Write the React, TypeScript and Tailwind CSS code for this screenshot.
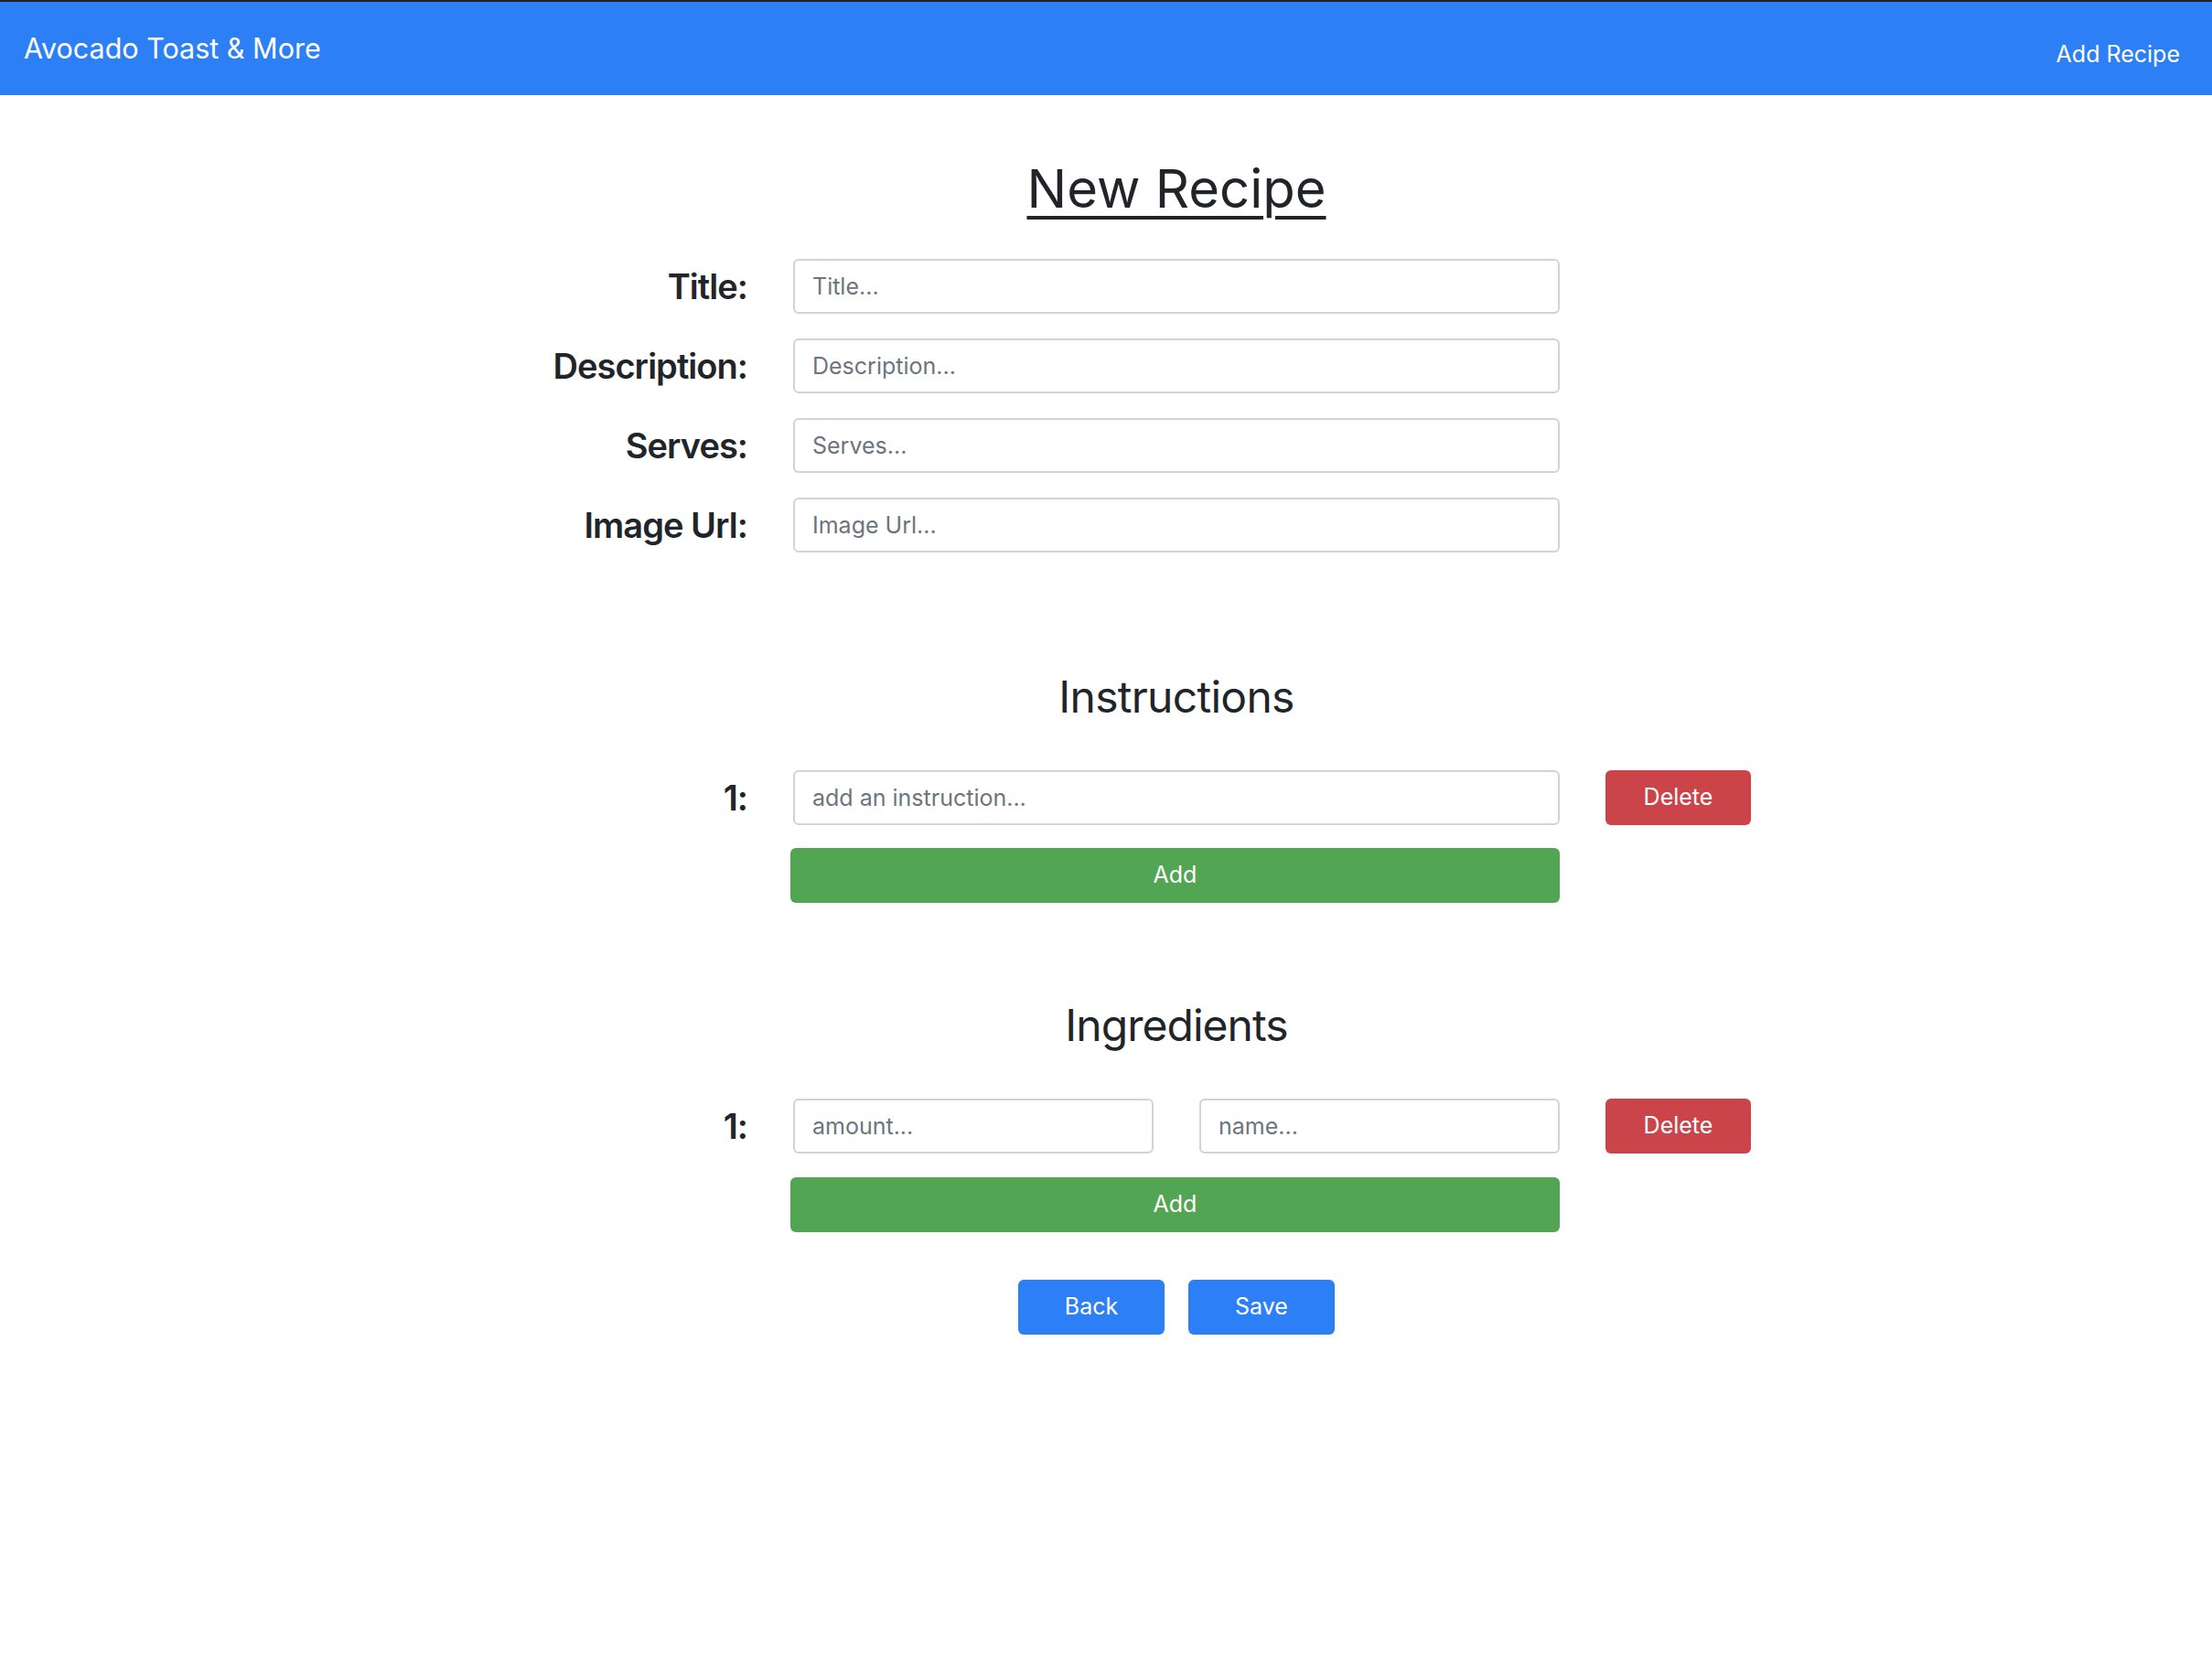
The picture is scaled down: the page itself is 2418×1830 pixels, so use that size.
import React, { useState } from 'react';

const font = "font-['Inter','Liberation_Sans',sans-serif]";

const inputClass =
  'w-full h-[60px] rounded-[6px] border-2 border-[#ced4da] bg-white px-[19px] text-[25px] text-[#495057] placeholder:text-[#6c757d] outline-none';

interface RowProps {
  label?: string;
  children?: React.ReactNode;
  action?: React.ReactNode;
  className?: string;
}

const Row: React.FC<RowProps> = ({ label, children, action, className = '' }) => (
  <div className={`grid grid-cols-[817px_838px_159px] gap-x-[50px] items-center ${className}`}>
    <div className="text-right text-[38px] font-semibold tracking-[-0.025em] leading-none text-[#212529]">{label}</div>
    <div>{children}</div>
    <div>{action}</div>
  </div>
);

const DeleteButton = () => (
  <button className="w-[159px] h-[60px] rounded-[6px] bg-[#cb444a] text-white text-[25px]">Delete</button>
);

const AddButton = ({ onClick }: { onClick?: () => void }) => (
  <button
    onClick={onClick}
    className="-ml-[3px] w-[841px] h-[60px] rounded-[6px] bg-[#52a552] text-white text-[25px]"
  >
    Add
  </button>
);

export default function App() {
  const [title, setTitle] = useState('');
  const [description, setDescription] = useState('');
  const [serves, setServes] = useState('');
  const [imageUrl, setImageUrl] = useState('');
  const [instruction, setInstruction] = useState('');
  const [amount, setAmount] = useState('');
  const [name, setName] = useState('');

  return (
    <div className={`min-h-screen bg-white text-[#212529] ${font}`}>
      {/* Navbar */}
      <nav className="h-[104px] border-t-2 border-[#222222] bg-[#2d7ff6] flex items-center justify-between pl-[26px] pr-[35px]">
        <span className="text-[30.5px] leading-none text-white">Avocado Toast &amp; More</span>
        <a href="#" className="mt-[12px] text-[25px] leading-none text-white">Add Recipe</a>
      </nav>

      <main className="pt-[66px] pb-[200px]">
        <Row>
          <h1 className="text-center text-[58px] leading-[72px] font-normal underline decoration-[4px] underline-offset-[9px]">
            New Recipe
          </h1>
        </Row>

        <div className="mt-[41px] flex flex-col gap-[27px]">
          <Row label="Title:">
            <input className={inputClass} placeholder="Title..." value={title} onChange={e => setTitle(e.target.value)} />
          </Row>
          <Row label="Description:">
            <input className={inputClass} placeholder="Description..." value={description} onChange={e => setDescription(e.target.value)} />
          </Row>
          <Row label="Serves:">
            <input className={inputClass} placeholder="Serves..." value={serves} onChange={e => setServes(e.target.value)} />
          </Row>
          <Row label="Image Url:">
            <input className={inputClass} placeholder="Image Url..." value={imageUrl} onChange={e => setImageUrl(e.target.value)} />
          </Row>
        </div>

        {/* Instructions */}
        <Row className="mt-[127px]">
          <h2 className="text-center text-[48px] leading-[61px] font-normal tracking-[-0.015em]">Instructions</h2>
        </Row>
        <Row label="1:" action={<DeleteButton />} className="mt-[50px]">
          <input className={inputClass} placeholder="add an instruction..." value={instruction} onChange={e => setInstruction(e.target.value)} />
        </Row>
        <Row className="mt-[25px]">
          <AddButton />
        </Row>

        {/* Ingredients */}
        <Row className="mt-[103px]">
          <h2 className="text-center text-[48px] leading-[61px] font-normal tracking-[-0.02em]">Ingredients</h2>
        </Row>
        <Row label="1:" action={<DeleteButton />} className="mt-[50px]">
          <div className="flex gap-[50px]">
            <input className={inputClass} placeholder="amount..." value={amount} onChange={e => setAmount(e.target.value)} />
            <input className={inputClass} placeholder="name..." value={name} onChange={e => setName(e.target.value)} />
          </div>
        </Row>
        <Row className="mt-[26px]">
          <AddButton />
        </Row>

        <Row className="mt-[52px]">
          <div className="flex justify-center gap-[26px]">
            <button className="w-[160px] h-[60px] rounded-[6px] bg-[#2d7ff6] text-white text-[25px]">Back</button>
            <button className="w-[160px] h-[60px] rounded-[6px] bg-[#2d7ff6] text-white text-[25px]">Save</button>
          </div>
        </Row>
      </main>
    </div>
  );
}
